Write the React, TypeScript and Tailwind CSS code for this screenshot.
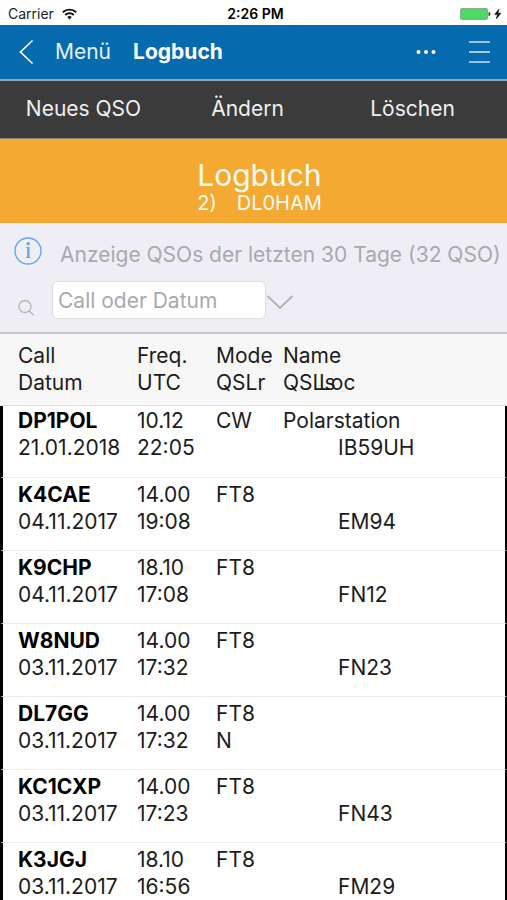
import React, { useState } from 'react';

type Qso = {
  call: string;
  date: string;
  freq: string;
  utc: string;
  mode: string;
  qslr?: string;
  name?: string;
  loc?: string;
};

const qsos: Qso[] = [
  { call: 'DP1POL', date: '21.01.2018', freq: '10.12', utc: '22:05', mode: 'CW', name: 'Polarstation', loc: 'IB59UH' },
  { call: 'K4CAE', date: '04.11.2017', freq: '14.00', utc: '19:08', mode: 'FT8', loc: 'EM94' },
  { call: 'K9CHP', date: '04.11.2017', freq: '18.10', utc: '17:08', mode: 'FT8', loc: 'FN12' },
  { call: 'W8NUD', date: '03.11.2017', freq: '14.00', utc: '17:32', mode: 'FT8', loc: 'FN23' },
  { call: 'DL7GG', date: '03.11.2017', freq: '14.00', utc: '17:32', mode: 'FT8', qslr: 'N' },
  { call: 'KC1CXP', date: '03.11.2017', freq: '14.00', utc: '17:23', mode: 'FT8', loc: 'FN43' },
  { call: 'K3JGJ', date: '03.11.2017', freq: '18.10', utc: '16:56', mode: 'FT8', loc: 'FM29' },
];

const StatusBar = () => (
  <div className="grid h-[25px] grid-cols-3 items-center bg-white pr-1 pl-2 pt-0.5 text-sm text-[#222]">
    <div className="flex items-center gap-2">
      Carrier
      <svg width="15" height="12" viewBox="0 0 15 12" fill="none" stroke="#111" strokeWidth="1.9">
        <path d="M0.8 4.3a9.6 9.6 0 0 1 13.4 0" />
        <path d="M3.2 7a6.1 6.1 0 0 1 8.6 0" />
        <path d="M7.5 11.6 5.2 9.1a3.4 3.4 0 0 1 4.6 0z" fill="#111" stroke="none" />
      </svg>
    </div>
    <div className="text-center font-semibold text-black">2:26 PM</div>
    <div className="flex items-center justify-end">
      <svg width="43" height="14" viewBox="0 0 43 14">
        <rect x="0.5" y="1.5" width="27" height="11" rx="1.5" fill="#4cd964" stroke="#8fa893" />
        <path d="M28.5 5a2 2 0 0 1 0 4z" fill="#333" />
        <path d="M39 2 34.5 7.6h2.9L36.2 12l4.8-5.8h-3z" fill="#111" stroke="#111" strokeWidth="0.5" />
      </svg>
    </div>
  </div>
);

const NavBar = () => (
  <header className="flex h-[56px] items-center border-b-2 border-[#8fa9b8] bg-[#066aae] pr-4 pl-[18px] text-[21px] text-white">
    <button type="button" className="flex items-center gap-5 text-[#e3f0fa]">
      <svg width="17" height="26" viewBox="0 0 17 26" fill="none" stroke="#fff" strokeWidth="1.7">
        <path d="M14.5 1.5 2.5 13l12 11.5" />
      </svg>
      Menü
    </button>
    <h1 className="ml-[22px] font-bold">Logbuch</h1>
    <button type="button" aria-label="Mehr" className="ml-auto">
      <svg width="20" height="6" viewBox="0 0 20 6" fill="#fff">
        <circle cx="2.5" cy="3" r="2" />
        <circle cx="10" cy="3" r="2" />
        <circle cx="17.5" cy="3" r="2" />
      </svg>
    </button>
    <button type="button" aria-label="Navigation" className="ml-8">
      <svg width="23" height="24" viewBox="0 0 23 24" strokeWidth="2">
        <path d="M1 2h21M1 22h21" stroke="#93c4ec" />
        <path d="M1 12h21" stroke="#d9ecf8" strokeWidth="1.5" />
      </svg>
    </button>
  </header>
);

const Toolbar = () => (
  <div className="grid h-[58px] grid-cols-3 border-b border-[#8d8775] bg-[#3b3b3b] text-[21px] text-[#f0f0f0]">
    <button type="button" className="pr-0.5 pb-0.5">Neues QSO</button>
    <button type="button" className="pr-3 pb-0.5">Ändern</button>
    <button type="button" className="pr-5 pb-0.5">Löschen</button>
  </div>
);

const Filter = () => {
  const [search, setSearch] = useState('');

  return (
    <section className="border-b-2 border-[#c6c6c8] bg-[#efeef4] px-3 pt-3 pb-[13px]">
      <div className="flex items-start">
        <svg className="shrink-0" width="32" height="32" viewBox="0 0 32 32" fill="none" stroke="#65a5f5">
          <circle cx="16" cy="16" r="13" strokeWidth="1.4" />
          <path d="M16.3 12v10.5" strokeWidth="2.4" />
          <path d="M14 12.6h3M14 22.500h4.500" strokeWidth="1" />
          <circle cx="16.2" cy="8.8" r="1.7" fill="#65a5f5" stroke="none" />
        </svg>
        <p className="ml-4 pt-1 text-[21px] leading-8 whitespace-nowrap text-[#a9a9ad]">
          Anzeige QSOs der letzten 30 Tage (32 QSO)
        </p>
      </div>
      <div className="mt-[10px] flex items-center">
        <label htmlFor="search" aria-label="Suche" className="ml-1 pt-4">
          <svg width="20" height="20" viewBox="0 0 20 20" fill="none" stroke="#b6b6ba" strokeWidth="1.3">
            <circle cx="9" cy="8.5" r="6" />
            <path d="m13.3 13 4.5 4.3" />
          </svg>
        </label>
        <input
          id="search"
          type="text"
          value={search}
          onChange={(e) => setSearch(e.target.value)}
          placeholder="Call oder Datum"
          className="ml-4 h-[38px] w-[214px] rounded-md border border-[#dddde1] bg-white px-[5px] text-[21px] outline-none placeholder:text-[#a9a9ad]"
        />
        <button type="button" aria-label="Auswahl" className="pt-1">
          <svg width="28" height="18" viewBox="0 0 28 18" fill="none" stroke="#b0b0b6" strokeWidth="1.8">
            <path d="M1.5 3 14 15 26.5 3" />
          </svg>
        </button>
      </div>
    </section>
  );
};

const LogTable = () => (
  <table className="w-full table-fixed border-separate border-spacing-0 text-left text-[21px] leading-[27px] whitespace-nowrap text-[#1c1c1c]">
    <colgroup>
      <col className="w-[137px]" />
      <col className="w-[79px]" />
      <col className="w-[67px]" />
      <col />
    </colgroup>
    <thead className="bg-[#f7f7f7]">
      <tr className="h-[72px] align-top *:border-b *:border-[#e2e2e2] *:pt-2 *:font-normal">
        <th className="pl-[18px]">Call<br />Datum</th>
        <th>Freq.<br />UTC</th>
        <th>Mode<br />QSLr</th>
        <th>
          Name
          {/* both labels share the line, Loc runs into QSLs */}
          <div className="grid">
            <span className="col-start-1 row-start-1">QSLs</span>
            <span className="col-start-1 row-start-1 pl-9">Loc</span>
          </div>
        </th>
      </tr>
    </thead>
    <tbody className="bg-white">
      {qsos.map((qso) => (
        <tr
          key={qso.call}
          className="h-[73px] align-top *:border-b *:border-b-[#ececec] *:pt-[3px] first:h-[72px] first:*:pt-px"
        >
          <td className="border-l-3 border-l-black pl-[15px]">
            <div className="font-bold text-black">{qso.call}</div>
            {qso.date}
          </td>
          <td>
            {qso.freq}
            <div>{qso.utc}</div>
          </td>
          <td>
            {qso.mode}
            <div>{qso.qslr}</div>
          </td>
          <td className="border-r-2 border-r-black">
            <div className="h-[27px]">{qso.name}</div>
            <div className="pl-[55px]">{qso.loc}</div>
          </td>
        </tr>
      ))}
    </tbody>
  </table>
);

const App = () => {
  return (
    <div className="h-screen w-full overflow-hidden bg-white font-['Inter',sans-serif]">
      <StatusBar />
      <NavBar />
      <Toolbar />
      <div className="flex h-[84px] flex-col items-center justify-end bg-[#f4a932] pb-2 text-[#fffaf0]">
        <div className="ml-3">
          <h2 className="text-3xl leading-8">Logbuch</h2>
          <p className="flex gap-5 text-xl leading-6">
            <span>2)</span>
            <span>DL0HAM</span>
          </p>
        </div>
      </div>
      <Filter />
      <LogTable />
    </div>
  );
};

export default App;
